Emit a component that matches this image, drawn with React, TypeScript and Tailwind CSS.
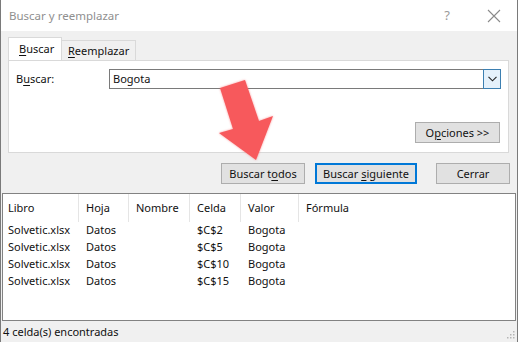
import React from 'react'

const rows = [
  { libro: 'Solvetic.xlsx', hoja: 'Datos', celda: '$C$2', valor: 'Bogota' },
  { libro: 'Solvetic.xlsx', hoja: 'Datos', celda: '$C$5', valor: 'Bogota' },
  { libro: 'Solvetic.xlsx', hoja: 'Datos', celda: '$C$10', valor: 'Bogota' },
  { libro: 'Solvetic.xlsx', hoja: 'Datos', celda: '$C$15', valor: 'Bogota' }
]

const headers = ['Libro', 'Hoja', 'Nombre', 'Celda', 'Valor', 'Fórmula']

export default function App() {
  return (
    <div
      className="relative w-[518px] h-[342px] overflow-hidden bg-[#f0f0f0] border-x border-[#7a7a7a] flex flex-col text-[11px] text-[#111]"
      style={{ fontFamily: '"Noto Sans", "Open Sans", sans-serif' }}
    >
      {/* Title bar */}
      <div className="h-[31px] shrink-0 bg-white flex items-center pl-[8px] text-[#8f8f8f] text-[11.5px]">
        <span className="flex-1">Buscar y reemplazar</span>
        <span className="w-[10px] text-center text-[13px] text-[#9a9a9a] mr-[35px]">?</span>
        <svg width="14" height="14" viewBox="0 0 14 14" className="mr-[16px]">
          <path d="M1 1L13 13M13 1L1 13" stroke="#8a8a8a" strokeWidth="1.1" />
        </svg>
      </div>

      <div className="px-[7px] pt-[7px] flex flex-col">
        {/* Tabs */}
        <div className="flex items-end h-[22px]">
          <div className="h-[23px] w-[54px] bg-white border border-b-0 border-[#d9d9d9] pl-[10px] pt-[3px] relative z-10">
            <span className="underline underline-offset-2">B</span>uscar
          </div>
          <div className="h-[20px] w-[74px] border border-l-0 border-b-0 border-[#d9d9d9] pl-[6px] pt-[2px]">
            <span className="underline underline-offset-2">R</span>eemplazar
          </div>
        </div>

        {/* Tab panel */}
        <div className="h-[93px] w-[501px] bg-white border border-[#d9d9d9] px-[7px] pt-[8px] flex flex-col">
          <div className="flex items-center h-[20px]">
            <span className="w-[93px]">
              B<span className="underline underline-offset-2">u</span>scar:
            </span>
            <div className="flex-1 h-[20px] border border-[#7a7a7a] flex items-center pl-[3px]">
              <span className="flex-1">Bogota</span>
              <div className="w-[18px] h-[20px] -mr-px border border-[#3c7fb1] bg-[#e5f1fb] flex items-center justify-center">
                <svg width="9" height="6" viewBox="0 0 9 6">
                  <path d="M0.5 0.8L4.5 4.8L8.5 0.8" stroke="#222" strokeWidth="1.1" fill="none" />
                </svg>
              </div>
            </div>
          </div>
          <div className="flex justify-end mt-[33px]">
            <button className="w-[85px] h-[21px] bg-[#e1e1e1] border border-[#adadad] leading-none mr-px">
              O<span className="underline underline-offset-2">p</span>ciones &gt;&gt;
            </button>
          </div>
        </div>

        {/* Buttons */}
        <div className="flex mt-[10px] h-[21px] pl-[213px] gap-[10px]">
          <button className="w-[84px] h-[21px] bg-[#e1e1e1] border border-[#adadad] leading-none">
            Buscar t<span className="underline underline-offset-2">o</span>dos
          </button>
          <button className="w-[102px] h-[21px] bg-[#e1e1e1] border-2 border-[#0078d7] leading-none">
            Buscar <span className="underline underline-offset-2">s</span>iguiente
          </button>
          <button className="w-[74px] h-[21px] bg-[#e1e1e1] border border-[#adadad] leading-none ml-[9px]">
            Cerrar
          </button>
        </div>
      </div>

      {/* Results */}
      <div className="mt-[9px] mx-[1px] h-[128px] bg-white border border-[#828282] flex flex-col">
        <div className="grid grid-cols-[76px_50px_61px_51px_58px_1fr] h-[28px] items-stretch">
          {headers.map((h, i) => (
            <div
              key={h}
              className={`flex items-center ${i === 0 ? 'pl-[5px]' : 'pl-[7px]'} ${i < 5 ? 'border-r border-[#e5e5e5]' : ''}`}
            >
              {h}
            </div>
          ))}
        </div>
        {rows.map((r) => (
          <div key={r.celda} className="grid grid-cols-[76px_50px_61px_51px_58px_1fr] h-[17px] items-center">
            <div className="pl-[5px]">{r.libro}</div>
            <div className="pl-[7px]">{r.hoja}</div>
            <div className="pl-[7px]"></div>
            <div className="pl-[7px]">{r.celda}</div>
            <div className="pl-[7px]">{r.valor}</div>
            <div></div>
          </div>
        ))}
      </div>

      {/* Status bar */}
      <div className="flex-1 flex items-center pl-[2px] pt-px relative">
        4 celda(s) encontradas
        <svg width="10" height="10" viewBox="0 0 10 10" className="absolute right-[2px] bottom-[3px]">
          {[
            [8, 2], [8, 5], [5, 5], [8, 8], [5, 8], [2, 8]
          ].map(([x, y]) => (
            <rect key={`${x}-${y}`} x={x} y={y} width="1.5" height="1.5" fill="#b5b5b5" />
          ))}
        </svg>
      </div>

      {/* Red arrow annotation */}
      <svg className="absolute left-0 top-0 pointer-events-none" width="518" height="342" viewBox="0 0 518 342">
        <polygon
          points="219,88 244,80 258,121 272,116 255,160 218,133 232,129"
          fill="#f7595c"
          style={{ filter: 'drop-shadow(0 0 1px rgba(247,89,92,0.6))' }}
        />
      </svg>
    </div>
  )
}
